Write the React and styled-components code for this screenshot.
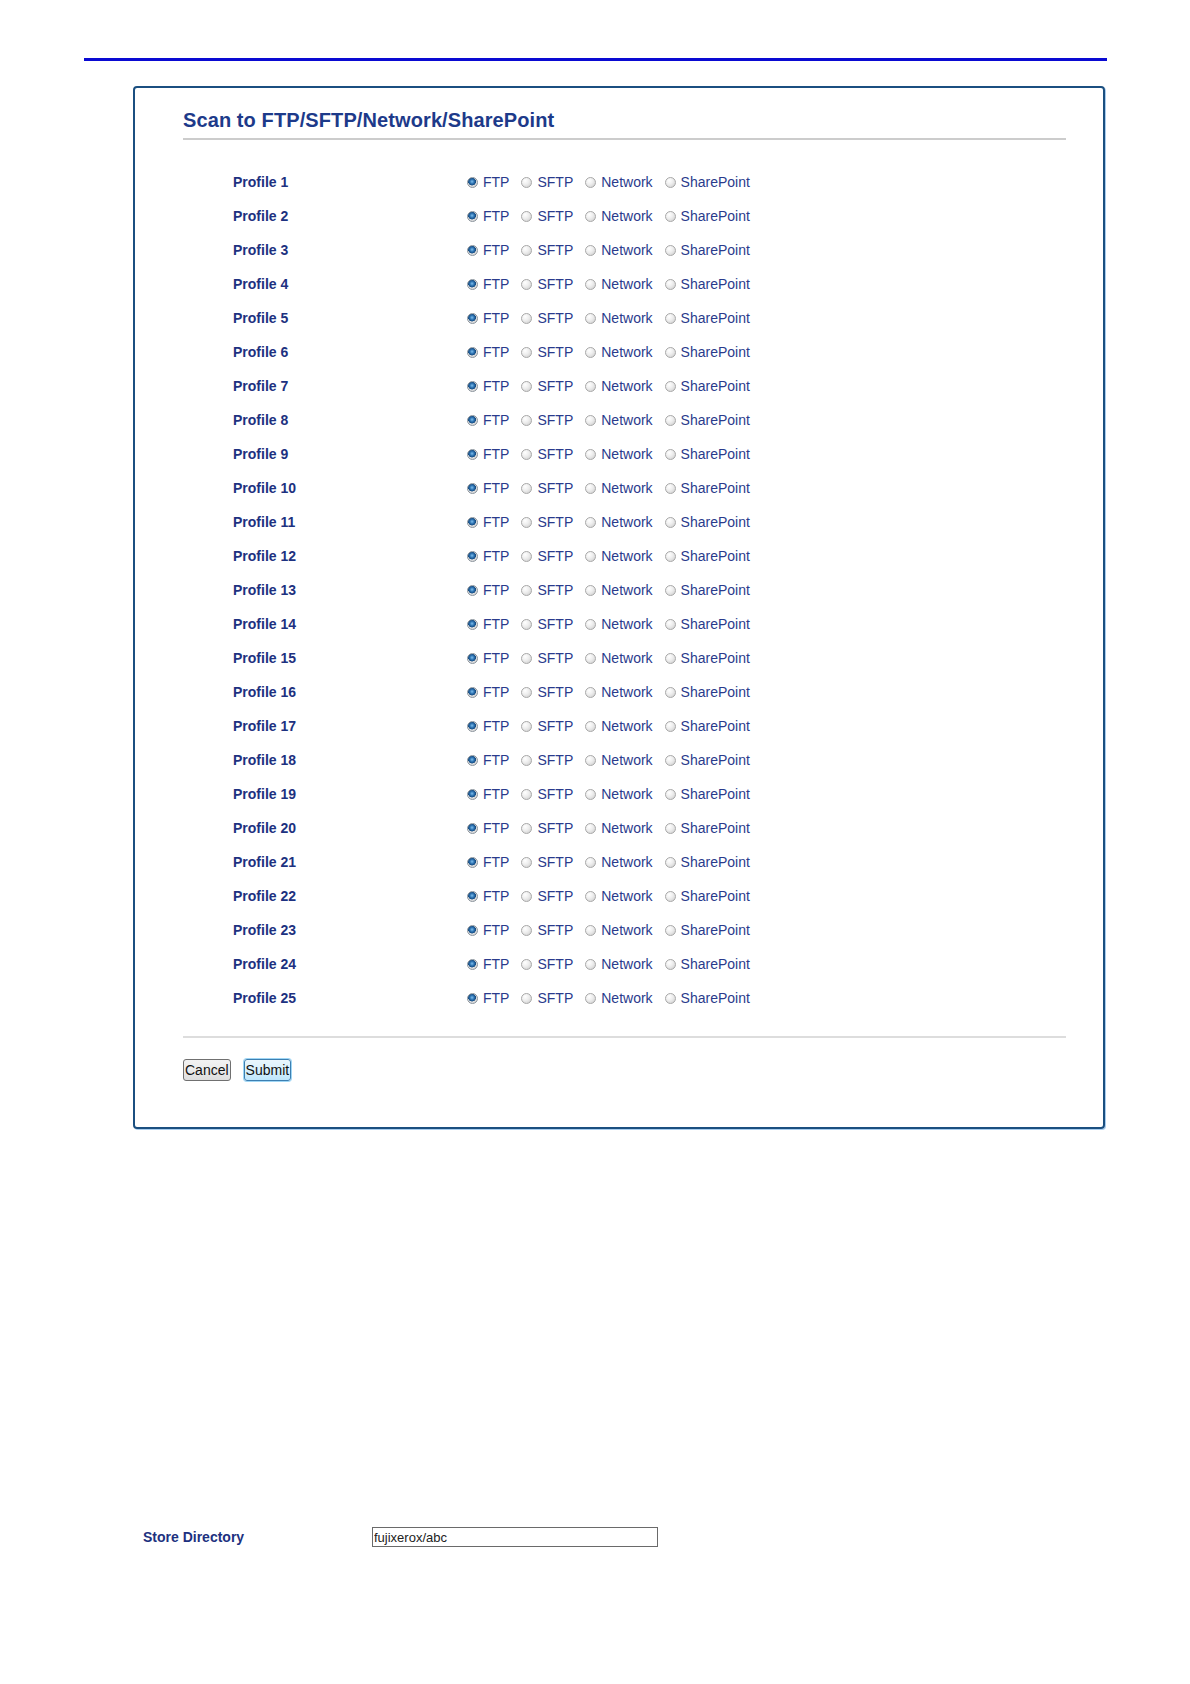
import React from 'react';
import styled, { createGlobalStyle } from 'styled-components';

const GlobalStyle = createGlobalStyle`
    html, body {
        margin: 0;
        padding: 0;
        background: #ffffff;
    }
    body {
        font-family: 'Liberation Sans', Arial, sans-serif;
        min-height: 1684px;
    }
`;

const Page = styled.div`
    width: 1190px;
    padding-top: 58px;
`;

const TopRule = styled.div`
    height: 3px;
    margin: 0 83px 0 84px;
    background: #0a0ad2;
`;

const Panel = styled.section`
    margin: 25px 85px 0 133px;
    border: 2px solid #1b4f80;
    border-radius: 4px;
    box-shadow: 1px 1px 0 #a9cdee;
    padding: 20px 37px 46px 48px;
`;

const Title = styled.h2`
    margin: 0;
    padding-bottom: 6px;
    border-bottom: 2px solid #cccccc;
    font-size: 20px;
    line-height: 24px;
    font-weight: bold;
    letter-spacing: 0.1px;
    color: #1d3a8a;
`;

const ProfileList = styled.div`
    margin-top: 25px;
    padding-left: 50px;
    padding-bottom: 21px;
    border-bottom: 2px solid #dddddd;
`;

const ProfileRow = styled.div`
    display: grid;
    grid-template-columns: 234px 1fr;
    align-items: center;
    height: 34px;
`;

const Label = styled.span`
    font-size: 14px;
    font-weight: bold;
    color: #1d3180;
`;

const Options = styled.div`
    display: flex;
    align-items: center;
    gap: 12px;
`;

const Option = styled.label`
    display: flex;
    align-items: center;
    gap: 5px;
    font-size: 14px;
    color: #2a3b8c;
`;

const Radio = styled.input.attrs({ type: 'radio' })`
    appearance: none;
    margin: 0;
    width: 11px;
    height: 11px;
    border-radius: 50%;
    border: 1px solid #a8a8a8;
    background: radial-gradient(circle at 35% 30%, #ffffff 0%, #ededed 45%, #c9c9c9 100%);
    &:checked {
        border-color: #8a939c;
        background:
            radial-gradient(circle at 45% 40%, #7fc0ee 0%, #2a6fae 30%, #164b80 50%, transparent 56%),
            radial-gradient(circle at 35% 30%, #ffffff 0%, #e6e6e6 55%, #c4c4c4 100%);
    }
`;

const Actions = styled.div`
    display: flex;
    gap: 13px;
    margin-top: 21px;
`;

const Button = styled.button`
    font-family: 'Liberation Sans', Arial, sans-serif;
    font-size: 14px;
    line-height: 18px;
    height: 22px;
    padding: 0 1px;
    color: #111111;
    border-radius: 3px;
    border: 1px solid ${props => props.focused ? '#3c7fb1' : '#707070'};
    background: ${props => props.focused
        ? 'linear-gradient(#eaf6fd, #d9f0fc 50%, #bee6fd)'
        : 'linear-gradient(#f2f2f2, #ebebeb 50%, #dddddd)'};
    box-shadow: ${props => props.focused ? '0 0 0 1px #9fd6f5' : 'none'};
`;

const StoreRow = styled.div`
    display: grid;
    grid-template-columns: 229px 286px;
    align-items: center;
    margin: 398px 0 0 143px;
`;

const TextInput = styled.input`
    box-sizing: border-box;
    width: 286px;
    height: 20px;
    padding: 0 1px;
    border: 1px solid #6a6a6a;
    font-family: 'Liberation Sans', Arial, sans-serif;
    font-size: 13px;
    color: #222222;
`;

const protocols = ['FTP', 'SFTP', 'Network', 'SharePoint'];
const profiles = Array.from({ length: 25 }, (_, i) => i + 1);

const App = () => (
    <Page>
        <GlobalStyle />
        <TopRule />
        <Panel>
            <Title>Scan to FTP/SFTP/Network/SharePoint</Title>
            <ProfileList>
                {profiles.map(n => (
                    <ProfileRow key={n}>
                        <Label>Profile {n}</Label>
                        <Options>
                            {protocols.map(p => (
                                <Option key={p}>
                                    <Radio name={`profile${n}`} defaultChecked={p === 'FTP'} />
                                    {p}
                                </Option>
                            ))}
                        </Options>
                    </ProfileRow>
                ))}
            </ProfileList>
            <Actions>
                <Button type="button">Cancel</Button>
                <Button type="submit" focused>Submit</Button>
            </Actions>
        </Panel>
        <StoreRow>
            <Label>Store Directory</Label>
            <TextInput defaultValue="fujixerox/abc" />
        </StoreRow>
    </Page>
);

export default App;
